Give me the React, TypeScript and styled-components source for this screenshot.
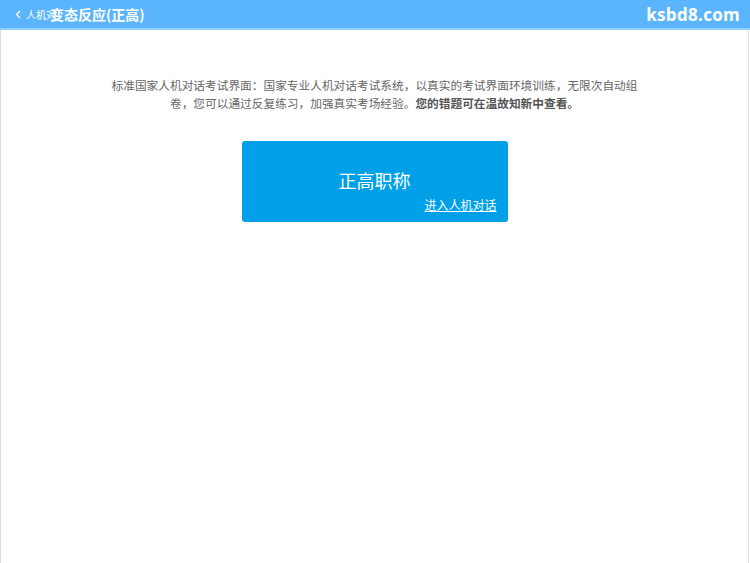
import styled, { createGlobalStyle } from "styled-components";

const GlobalStyle = createGlobalStyle`
  html, body {
    margin: 0;
    padding: 0;
    background: #fff;
  }
  body {
    font-family: "Noto Sans CJK SC", "Liberation Sans", sans-serif;
  }
`;

const Page = styled.div`
  width: 750px;
  height: 563px;
  display: flex;
  flex-direction: column;
`;

const Header = styled.div`
  height: 28px;
  background: #5ab5fc;
  border-bottom: 2px solid #8fd1fd;
  display: flex;
  align-items: center;
  justify-content: space-between;
  padding: 0 10px 0 15px;
  color: #fff;
`;

const Left = styled.div`
  display: flex;
  align-items: center;
`;

const BackLink = styled.div`
  display: flex;
  align-items: center;
  gap: 5px;
  font-size: 10px;
`;

const Title = styled.div`
  font-size: 14px;
  font-weight: 700;
  margin-left: -6px;
`;

const Brand = styled.div`
  font-family: "Open Sans", "Liberation Sans", sans-serif;
  font-size: 17px;
  font-weight: 700;
  letter-spacing: 0.3px;
`;

const Body = styled.div`
  flex: 1;
  width: 747px;
  border-left: 1px solid #ddd;
  border-right: 1px solid #ddd;
  display: flex;
  flex-direction: column;
  align-items: center;
  padding-top: 46px;
`;

const Intro = styled.p`
  margin: 0;
  width: 530px;
  font-size: 11.7px;
  line-height: 18px;
  color: #666;
  text-align: center;

  b {
    color: #555;
  }
`;

const Card = styled.div`
  margin-top: 29px;
  width: 266px;
  height: 81px;
  background: #00a0e9;
  border-radius: 3px;
  display: flex;
  flex-direction: column;
  align-items: center;
  color: #fff;
  box-sizing: border-box;
  padding: 27px 11px 0;
`;

const CardTitle = styled.div`
  font-size: 18px;
  line-height: 24px;
`;

const CardLink = styled.a`
  align-self: flex-end;
  margin-top: 4px;
  font-size: 12px;
  color: #fff;
  text-decoration: underline;
`;

export default function App() {
  return (
    <>
      <GlobalStyle />
      <Page>
        <Header>
          <Left>
            <BackLink>
              <svg width="6" height="9" viewBox="0 0 6 9">
                <path d="M5 1 L1.5 4.5 L5 8" stroke="#fff" strokeWidth="1.3" fill="none" />
              </svg>
              <span>人机对</span>
            </BackLink>
            <Title>变态反应(正高)</Title>
          </Left>
          <Brand>ksbd8.com</Brand>
        </Header>
        <Body>
          <Intro>
            标准国家人机对话考试界面：国家专业人机对话考试系统，以真实的考试界面环境训练，无限次自动组卷，您可以通过反复练习，加强真实考场经验。
            <b>您的错题可在温故知新中查看。</b>
          </Intro>
          <Card>
            <CardTitle>正高职称</CardTitle>
            <CardLink>进入人机对话</CardLink>
          </Card>
        </Body>
      </Page>
    </>
  );
}
